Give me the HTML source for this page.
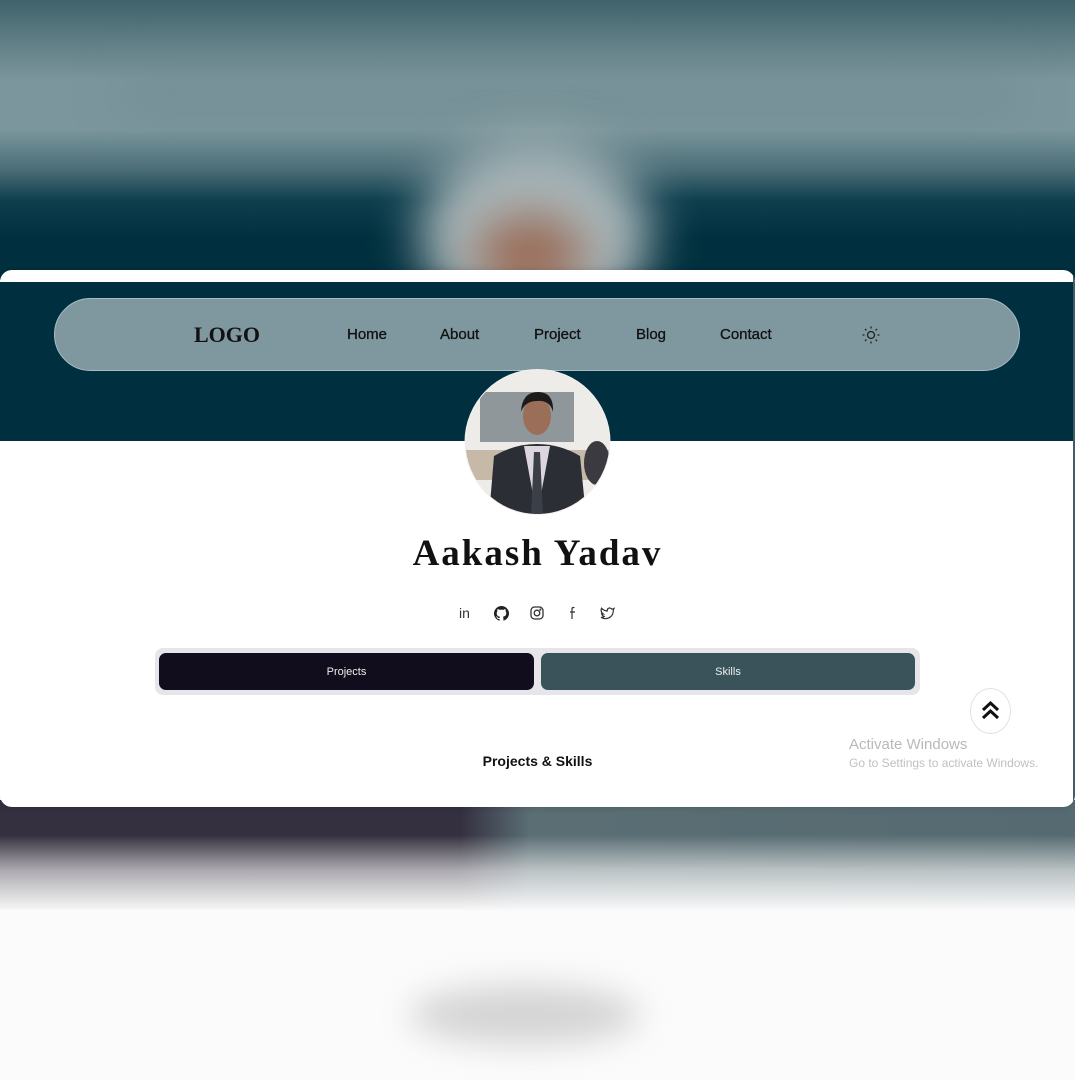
<!DOCTYPE html>
<html><head><meta charset="utf-8">
<style>
*{margin:0;padding:0;box-sizing:border-box}
body{width:1075px;height:1080px;overflow:hidden;position:relative;background:#fff;font-family:"Liberation Sans",sans-serif}
.abs{position:absolute}
.blur{filter:blur(24px)}
.nav{font-size:15px;color:#111;-webkit-text-stroke:0.3px #111}
</style></head><body>
<!-- top blurred area -->
<div class="abs" style="left:0;top:0;width:1075px;height:280px;overflow:hidden;background:linear-gradient(#3f626b 0px,#5f7d84 40px,#7b969c 80px,#7b969c 130px,#4a6d78 170px,#0f3f4e 200px,#00303f 240px,#00303f 280px)">
  <div class="abs blur" style="left:120px;top:70px;width:900px;height:50px;background:#6d878e;opacity:.4"></div>
  <div class="abs blur" style="left:420px;top:140px;width:230px;height:190px;border-radius:50%;background:#a9b7ba"></div>
  <div class="abs blur" style="left:475px;top:215px;width:110px;height:80px;border-radius:50%;background:#9a6a55"></div>
</div>
<!-- bottom blurred area -->
<div class="abs" style="left:0;top:800px;width:1075px;height:280px;overflow:hidden;background:#fbfbfb">
  <div class="abs" style="left:0;top:0;width:1075px;height:110px;background:linear-gradient(90deg,#34303f 0,#34303f 460px,#5a6e74 530px,#566b71 1075px)"></div>
  <div class="abs" style="left:0;top:0;width:1075px;height:112px;background:linear-gradient(rgba(251,251,251,0) 0,rgba(251,251,251,0) 35px,rgba(251,251,251,.6) 70px,#fbfbfb 112px)"></div>
  <div class="abs" style="left:410px;top:185px;width:230px;height:60px;border-radius:50%;background:#d4d4d4;filter:blur(16px)"></div>
</div>
<!-- card -->
<div class="abs" style="left:0;top:270px;width:1075px;height:537px;background:#fff;border-radius:12px;overflow:hidden;box-shadow:0 0 8px rgba(0,0,0,.15)">
  <div class="abs" style="left:0;top:12px;width:1075px;height:159px;background:#003040"></div>
  <div class="abs" style="left:54px;top:28px;width:966px;height:73px;border-radius:37px;background:#7f98a0;border:1px solid #a9bcc2"></div>
  <div class="abs" style="left:194px;top:52px;font-family:'Liberation Serif',serif;font-weight:bold;font-size:22px;color:#111">LOGO</div>
  <div class="abs nav" style="left:347px;top:56px">Home</div>
  <div class="abs nav" style="left:440px;top:56px">About</div>
  <div class="abs nav" style="left:534px;top:56px">Project</div>
  <div class="abs nav" style="left:636px;top:56px">Blog</div>
  <div class="abs nav" style="left:720px;top:56px">Contact</div>
  <svg class="abs" style="left:861px;top:55px" width="20" height="20" viewBox="0 0 20 20" fill="none" stroke="#222" stroke-width="1.3"><circle cx="10" cy="10" r="3.5"/><path d="M10 1.5v2M10 16.5v2M1.5 10h2M16.5 10h2M4 4l1.4 1.4M14.6 14.6L16 16M4 16l1.4-1.4M14.6 5.4L16 4"/></svg>
  <!-- avatar -->
  <svg class="abs" style="left:464px;top:98px" width="147" height="148" viewBox="0 0 147 148">
    <defs><clipPath id="c"><circle cx="73.5" cy="74" r="72"/></clipPath></defs>
    <circle cx="73.5" cy="74" r="73" fill="#f2f1ee"/>
    <g clip-path="url(#c)">
      <rect x="0" y="0" width="147" height="148" fill="#eeece8"/>
      <rect x="16" y="24" width="94" height="50" fill="#8f979b"/>
      <rect x="0" y="82" width="147" height="30" fill="#c7b9a8"/>
      <ellipse cx="133" cy="95" rx="13" ry="22" fill="#3a3a40"/>
      <path d="M25 148 L30 88 Q50 76 73 76 Q96 76 116 88 L122 148Z" fill="#2c2e36"/>
      <path d="M60 78 L73 148 L86 78Z" fill="#ddd6de"/>
      <path d="M70 84 L76 84 L79 148 L67 148Z" fill="#3b4048"/>
      <ellipse cx="73" cy="48" rx="14" ry="19" fill="#9a6e58"/>
      <path d="M57 44 Q58 24 74 24 Q90 24 89 44 Q86 32 73 33 Q61 33 57 44Z" fill="#1e1a1a"/>
    </g>
  </svg>
  <div class="abs" style="left:0;width:1075px;top:262px;text-align:center;font-family:'Liberation Serif',serif;font-weight:bold;font-size:37px;letter-spacing:2px;color:#111">Aakash Yadav</div>
  <!-- socials -->
  <div class="abs" style="left:459px;top:335px;font-size:14px;color:#333">in</div>
  <svg class="abs" style="left:494px;top:336px" width="15" height="15" viewBox="0 0 16 16"><path fill="#222" d="M8 0C3.6 0 0 3.6 0 8c0 3.5 2.3 6.5 5.5 7.6.4.1.5-.2.5-.4v-1.4c-2.2.5-2.7-1-2.7-1-.4-.9-.9-1.2-.9-1.2-.7-.5.1-.5.1-.5.8.1 1.2.8 1.2.8.7 1.3 1.9.9 2.3.7.1-.5.3-.9.5-1.1-1.8-.2-3.600-.9-3.600-4 0-.9.3-1.600.8-2.100-.1-.2-.4-1 .1-2.100 0 0 .7-.2 2.200.8.6-.2 1.300-.3 2-.3s1.400.1 2 .3c1.500-1 2.200-.8 2.200-.8.4 1.100.2 1.900.1 2.100.5.6.8 1.300.8 2.100 0 3.100-1.900 3.700-3.600 3.900.3.3.5.8.5 1.500v2.200c0 .2.1.5.6.4C13.7 14.5 16 11.5 16 8c0-4.4-3.6-8-8-8z"/></svg>
  <svg class="abs" style="left:530px;top:336px" width="14" height="14" viewBox="0 0 14 14" fill="none" stroke="#333" stroke-width="1.3"><rect x="1" y="1" width="12" height="12" rx="3.5"/><circle cx="7" cy="7" r="2.8"/><circle cx="10.4" cy="3.6" r=".4" fill="#333"/></svg>
  <svg class="abs" style="left:568px;top:336px" width="9" height="14" viewBox="0 0 9 14" fill="none" stroke="#333" stroke-width="1.2"><path d="M6.5 1.5H5.5Q4 1.5 4 3V13M2 6H7"/></svg>
  <svg class="abs" style="left:600px;top:337px" width="15" height="13" viewBox="0 0 15 13" fill="none" stroke="#333" stroke-width="1.2"><path d="M14 1.5q-1 .6-2 .7Q10.5.5 8.6 1.2 7 2 7.2 4 4 3.8 1.5 1.2q-1.3 3.6 1.8 5.8-1 0-1.6-.5 .3 2.3 2.6 3-1 1-3.3.9 5 2.8 9.5-.5 3-2.8 2.8-6.8z"/></svg>
  <!-- tabs -->
  <div class="abs" style="left:155px;top:378px;width:765px;height:47px;border-radius:8px;background:#e6e6ea"></div>
  <div class="abs" style="left:159px;top:383px;width:375px;height:37px;border-radius:7px;background:#110d1c;color:#eee;font-size:11px;text-align:center;line-height:38px">Projects</div>
  <div class="abs" style="left:541px;top:383px;width:374px;height:37px;border-radius:7px;background:#3a535b;color:#eee;font-size:11px;text-align:center;line-height:38px">Skills</div>
  <div class="abs" style="left:0;width:1075px;top:483px;text-align:center;font-weight:bold;font-size:14px;color:#111">Projects &amp; Skills</div>
  <!-- scroll top -->
  <div class="abs" style="left:970px;top:418px;width:41px;height:46px;border-radius:50%;background:#fff;border:1px solid #e2e2e2"></div>
  <svg class="abs" style="left:980px;top:429px" width="21" height="22" viewBox="0 0 21 22" fill="none" stroke="#111" stroke-width="3"><path d="M3 11L10.5 4 18 11M3 19L10.5 12 18 19"/></svg>
  <div class="abs" style="left:849px;top:466px;font-size:15px;color:#b9b9b9">Activate Windows</div>
  <div class="abs" style="left:849px;top:486px;font-size:12px;color:#c0c0c0">Go to Settings to activate Windows.</div>
  <div class="abs" style="left:1073px;top:0;width:2px;height:537px;background:#3f5d66"></div>
</div>
</body></html>
